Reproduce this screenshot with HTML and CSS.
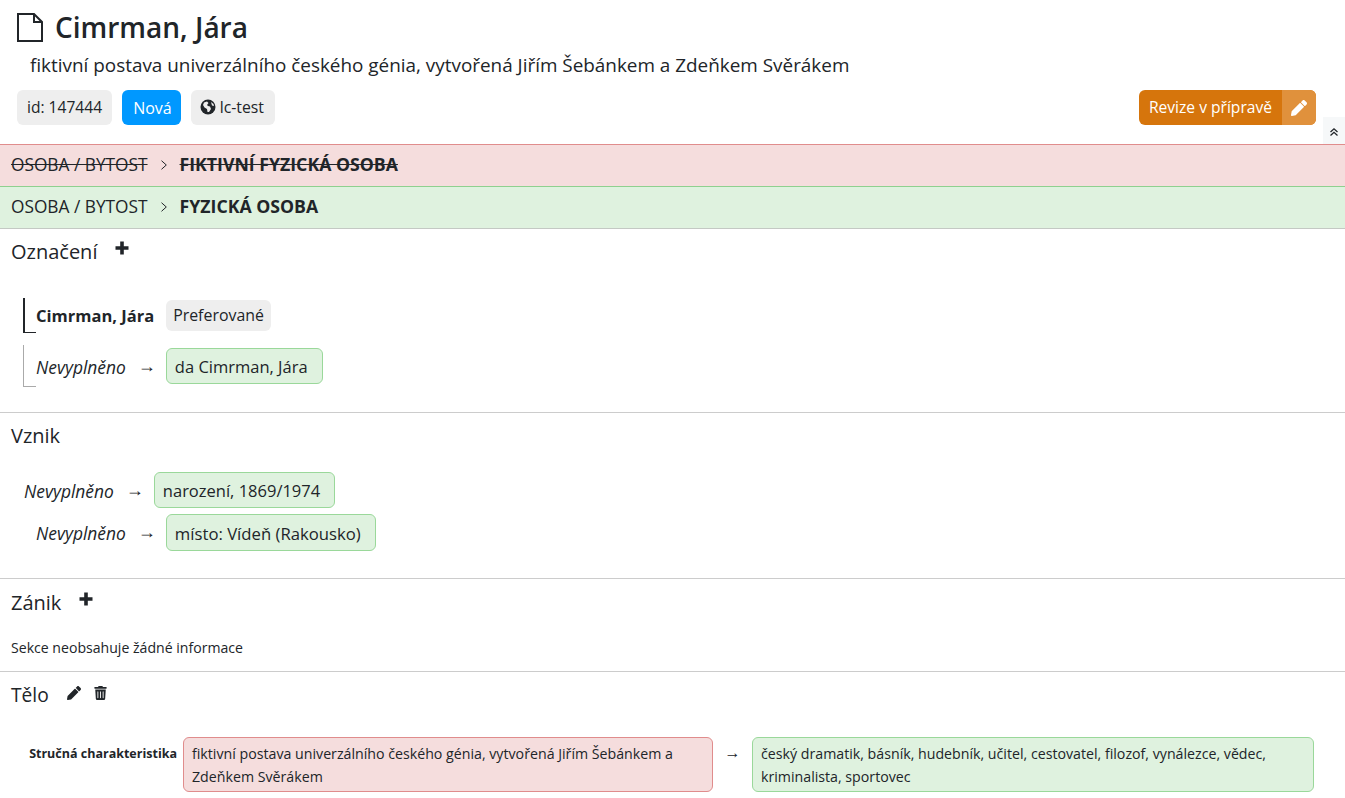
FILE: index.html
```html
<!DOCTYPE html>
<html lang="cs">

<head>
    <meta charset="UTF-8">
    <meta name="viewport" content="width=device-width, initial-scale=1.0">
    <title>Cimrman, Jára</title>
    <link rel="stylesheet" href="styles.css">
</head>

<body>
    <header class="page-head">
        <h1 class="title">
            <svg class="title-icon" viewBox="0 0 26 29" width="26" height="29" aria-hidden="true">
                <path d="M1 1H17L25 9V28H1Z M17 1V9H25" fill="none" stroke="#212529" stroke-width="2" />
            </svg>
            Cimrman, Jára
        </h1>
        <p class="subtitle">fiktivní postava univerzálního českého génia, vytvořená Jiřím Šebánkem a Zdeňkem Svěrákem</p>
        <div class="tag-row">
            <span class="tag tag-id">id: 147444</span>
            <span class="tag tag-blue">Nová</span>
            <span class="tag tag-source">
                <svg class="globe" viewBox="0 0 16 16" width="16" height="16" aria-hidden="true">
                    <circle cx="8" cy="8" r="7.5" fill="#212529" />
                    <path d="M4 3.500L7 2.500 8.500 4 7 6 8 7 10 7.500 11 10 9 13 7.500 13 7 10 4.500 8.500 3 6Z M11 3L13.500 5 14 7 12 6.500Z" fill="#eeeeee" />
                </svg>
                lc-test
            </span>
            <div class="revision">
                <span class="revision-label">Revize v přípravě</span>
                <span class="revision-edit">
                    <svg viewBox="0 0 512 512" width="16" height="16" aria-hidden="true">
                        <path fill="#fff" d="M497.900 142.100l-46.100 46.100c-4.700 4.700-12.300 4.700-17 0l-111-111c-4.700-4.700-4.700-12.300 0-17l46.100-46.100c18.700-18.700 49.100-18.700 67.900 0l60.100 60.100c18.800 18.700 18.800 49.100 0 67.900zM284.200 99.800L21.600 362.400.4 483.900c-2.900 16.400 11.400 30.600 27.800 27.800l121.500-21.300 262.600-262.600c4.700-4.700 4.700-12.300 0-17l-111-111c-4.800-4.700-12.400-4.700-17.100 0z" />
                    </svg>
                </span>
            </div>
        </div>
        <button class="collapse" aria-label="Sbalit">
            <svg viewBox="0 0 10 10" width="10" height="10" aria-hidden="true">
                <path d="M1.500 5L5 1.800 8.500 5 M1.500 8.500L5 5.300 8.500 8.500" fill="none" stroke="#212529" stroke-width="1.300" />
            </svg>
        </button>
    </header>

    <div class="type-bar type-old">
        <s>OSOBA / BYTOST</s>
        <svg class="chevron" viewBox="0 0 6 10" width="6" height="10" aria-hidden="true">
            <path d="M0.500 0.700L5.300 5 0.500 9.300" fill="none" stroke="#212529" />
        </svg>
        <s class="type-name">FIKTIVNÍ FYZICKÁ OSOBA</s>
    </div>
    <div class="type-bar type-new">
        <span>OSOBA / BYTOST</span>
        <svg class="chevron" viewBox="0 0 6 10" width="6" height="10" aria-hidden="true">
            <path d="M0.500 0.700L5.300 5 0.500 9.300" fill="none" stroke="#212529" />
        </svg>
        <span class="type-name">FYZICKÁ OSOBA</span>
    </div>

    <section class="part part-names">
        <h2 class="part-title">Označení
            <svg class="tool tool-plus" viewBox="0 0 14 14" width="14" height="14" aria-hidden="true">
                <path d="M5.200 0.500H8.800V5.200H13.500V8.800H8.800V13.500H5.200V8.800H0.500V5.200H5.200Z" fill="#212529" />
            </svg>
        </h2>
        <div class="name-row name-pref">
            <span class="bracket"></span>
            <b class="name">Cimrman, Jára</b>
            <span class="tag tag-small">Preferované</span>
        </div>
        <div class="name-row name-other">
            <span class="bracket"></span>
            <i class="empty">Nevyplněno</i>
            <span class="arrow">→</span>
            <span class="value value-green">da Cimrman, Jára</span>
        </div>
    </section>

    <section class="part part-origin">
        <h2 class="part-title">Vznik</h2>
        <div class="change-row change-first">
            <i class="empty">Nevyplněno</i>
            <span class="arrow">→</span>
            <span class="value value-green">narození, 1869/1974</span>
        </div>
        <div class="change-row change-indent">
            <i class="empty">Nevyplněno</i>
            <span class="arrow">→</span>
            <span class="value value-green">místo: Vídeň (Rakousko)</span>
        </div>
    </section>

    <section class="part part-end">
        <h2 class="part-title">Zánik
            <svg class="tool tool-plus" viewBox="0 0 14 14" width="14" height="14" aria-hidden="true">
                <path d="M5.200 0.500H8.800V5.200H13.500V8.800H8.800V13.500H5.200V8.800H0.500V5.200H5.200Z" fill="#212529" />
            </svg>
        </h2>
        <p class="no-info">Sekce neobsahuje žádné informace</p>
    </section>

    <section class="part part-body">
        <h2 class="part-title">Tělo
            <svg class="tool tool-edit" viewBox="0 0 512 512" width="14" height="14" aria-hidden="true">
                <path fill="#212529" d="M497.900 142.100l-46.100 46.100c-4.700 4.700-12.300 4.700-17 0l-111-111c-4.700-4.700-4.700-12.300 0-17l46.100-46.100c18.700-18.700 49.100-18.700 67.900 0l60.100 60.100c18.800 18.700 18.800 49.100 0 67.900zM284.200 99.800L21.600 362.400.4 483.900c-2.900 16.400 11.400 30.600 27.800 27.800l121.500-21.300 262.600-262.600c4.700-4.700 4.700-12.300 0-17l-111-111c-4.800-4.700-12.400-4.700-17.100 0z" />
            </svg>
            <svg class="tool tool-trash" viewBox="0 0 448 512" width="13" height="14" aria-hidden="true">
                <path fill="#212529" d="M432 32H312l-9.400-18.700A24 24 0 0 0 281.100 0H166.800a23.700 23.700 0 0 0-21.400 13.300L136 32H16A16 16 0 0 0 0 48v32a16 16 0 0 0 16 16h416a16 16 0 0 0 16-16V48a16 16 0 0 0-16-16zM53.200 467a48 48 0 0 0 47.900 45h245.800a48 48 0 0 0 47.900-45L416 128H32zM144 208v224a16 16 0 0 1-32 0V208a16 16 0 0 1 32 0zm96 0v224a16 16 0 0 1-32 0V208a16 16 0 0 1 32 0zm96 0v224a16 16 0 0 1-32 0V208a16 16 0 0 1 32 0z" />
            </svg>
        </h2>
        <div class="attr-row">
            <b class="attr-name">Stručná charakteristika</b>
            <div class="value value-red attr-value">fiktivní postava univerzálního českého génia, vytvořená Jiřím Šebánkem a Zdeňkem Svěrákem</div>
            <span class="arrow attr-arrow">→</span>
            <div class="value value-green attr-value attr-value-new">český dramatik, básník, hudebník, učitel, cestovatel, filozof, vynálezce, vědec, kriminalista, sportovec</div>
        </div>
    </section>
</body>

</html>
```

FILE: styles.css
```css
html,
body {
    height: 798px;
    overflow: hidden;
}

body {
    margin: 0;
    font-family: "Open Sans", "Noto Sans", sans-serif;
    font-size: 16px;
    line-height: 1.5;
    color: #212529;
    background-color: #fff;
}

.page-head {
    position: relative;
    height: 144px;
    padding: 0 29px 0 17px;
    box-sizing: border-box;
}

.title {
    display: flex;
    align-items: center;
    margin: 0;
    padding-top: 11px;
    height: 32px;
    font-size: 28px;
    font-weight: 600;
    line-height: 32px;
}

.title-icon {
    margin-right: 12px;
}

.subtitle {
    margin: 10px 0 0 13px;
    font-size: 18.900px;
    line-height: 24px;
}

.tag-row {
    display: flex;
    align-items: center;
    gap: 10px;
    margin-top: 13px;
}

.tag {
    display: inline-flex;
    align-items: center;
    gap: 4px;
    height: 35px;
    padding: 1px 10px 0;
    border-radius: 6px;
    box-sizing: border-box;
    background-color: #eee;
}

.tag-id {
    font-size: 15.600px;
}

.tag-source {
    padding: 1px 11px 0 9px;
    font-size: 15.800px;
}

.globe {
    margin-top: -2px;
}

.tag-blue {
    padding: 1px 9px 0 11px;
    color: #fff;
    background-color: #0098ff;
}

.tag-small {
    height: 31px;
    padding: 1px 7px 0;
    font-size: 15.900px;
}

.revision {
    display: flex;
    height: 35px;
    margin-left: auto;
    border-radius: 6px;
    overflow: hidden;
    color: #fff;
    background-color: #d6750c;
}

.revision-label {
    display: flex;
    align-items: center;
    padding: 1px 10px 0;
    font-size: 15.600px;
}

.revision-edit {
    display: flex;
    align-items: center;
    justify-content: center;
    width: 34px;
    background-color: #e0913c;
}

.collapse {
    position: absolute;
    right: 0;
    bottom: 0;
    width: 22px;
    height: 27px;
    padding: 4px 0 0;
    border: none;
    background-color: #f6f8f9;
}

.type-bar {
    display: flex;
    align-items: center;
    padding: 0 0 2px 11px;
    box-sizing: border-box;
    font-size: 17.300px;
}

.type-old {
    height: 42px;
    border-top: 1px solid #e08c8c;
    background-color: #f5dddd;
}

.type-new {
    height: 43px;
    border-top: 1px solid #8fd08f;
    border-bottom: 1px solid #c4c9c4;
    background-color: #dff2df;
}

.chevron {
    margin: 0 13px;
}

.type-name {
    font-size: 17.700px;
    font-weight: 700;
}

.part {
    padding: 0 11px;
    border-bottom: 1px solid #ccc;
    box-sizing: border-box;
}

.part-names {
    height: 184px;
}

.part-origin {
    height: 166px;
}

.part-end {
    height: 93px;
    padding-top: 1px;
}

.part-body {
    border-bottom: none;
}

.part-title {
    margin: 0;
    padding-top: 9px;
    font-size: 20px;
    font-weight: 400;
    line-height: 27px;
}

.part-body .part-title {
    font-size: 19.200px;
}

.tool {
    vertical-align: 4px;
}

.tool-plus {
    margin-left: 12px;
}

.tool-edit {
    margin-left: 13px;
    vertical-align: 2px;
}

.tool-trash {
    margin-left: 8px;
    vertical-align: 2px;
}

.name-row {
    display: flex;
    align-items: center;
    gap: 12px;
    margin-left: 12px;
}

.bracket {
    align-self: stretch;
    width: 12px;
    margin-right: -12px;
    border-left: 1px solid #aaa;
    border-bottom: 1px solid #aaa;
}

.name-pref {
    height: 35px;
    margin-top: 33px;
}

.name-pref .bracket {
    width: 11px;
    margin-right: -12px;
    border-left: 2px solid #212529;
    border-bottom: 1px solid #212529;
}

.name-other {
    height: 42px;
    margin-top: 12px;
}

.name {
    padding-top: 2px;
    font-size: 16.500px;
}

.empty {
    padding-top: 2px;
    font-size: 17.400px;
    font-style: italic;
}

.arrow {
    width: 16px;
    font-family: "Liberation Sans", sans-serif;
    font-size: 18px;
    text-align: center;
}

.value {
    display: inline-flex;
    align-items: center;
    height: 36px;
    padding: 2px 14px 0 8px;
    border-radius: 6px;
    box-sizing: border-box;
    font-size: 16.500px;
}

.value-green {
    border: 1px solid #9ad89a;
    background-color: #dff2df;
}

.value-red {
    border: 1px solid #e08c8c;
    background-color: #f5dddd;
}

.change-row {
    display: flex;
    align-items: center;
    gap: 12px;
    height: 36px;
    margin-left: 13px;
}

.change-first {
    margin-top: 23px;
}

.change-indent {
    height: 37px;
    margin-top: 6px;
    margin-left: 25px;
}

.change-indent .value {
    height: 37px;
    font-size: 16.700px;
}

.no-info {
    margin: 21px 0 0;
    font-size: 14.100px;
}

.attr-row {
    display: flex;
    align-items: flex-start;
    margin-top: 29px;
}

.attr-name {
    width: 172px;
    flex: none;
    padding: 8px 6px 0 0;
    box-sizing: border-box;
    font-size: 12.500px;
    text-align: right;
}

.attr-value {
    display: block;
    width: 530px;
    height: 55px;
    padding: 4px 8px;
    font-size: 14.200px;
    line-height: 23px;
}

.attr-arrow {
    width: 39px;
    padding-top: 4px;
    text-align: center;
    font-size: 16px;
}

.attr-value-new {
    width: 562px;
}
```
